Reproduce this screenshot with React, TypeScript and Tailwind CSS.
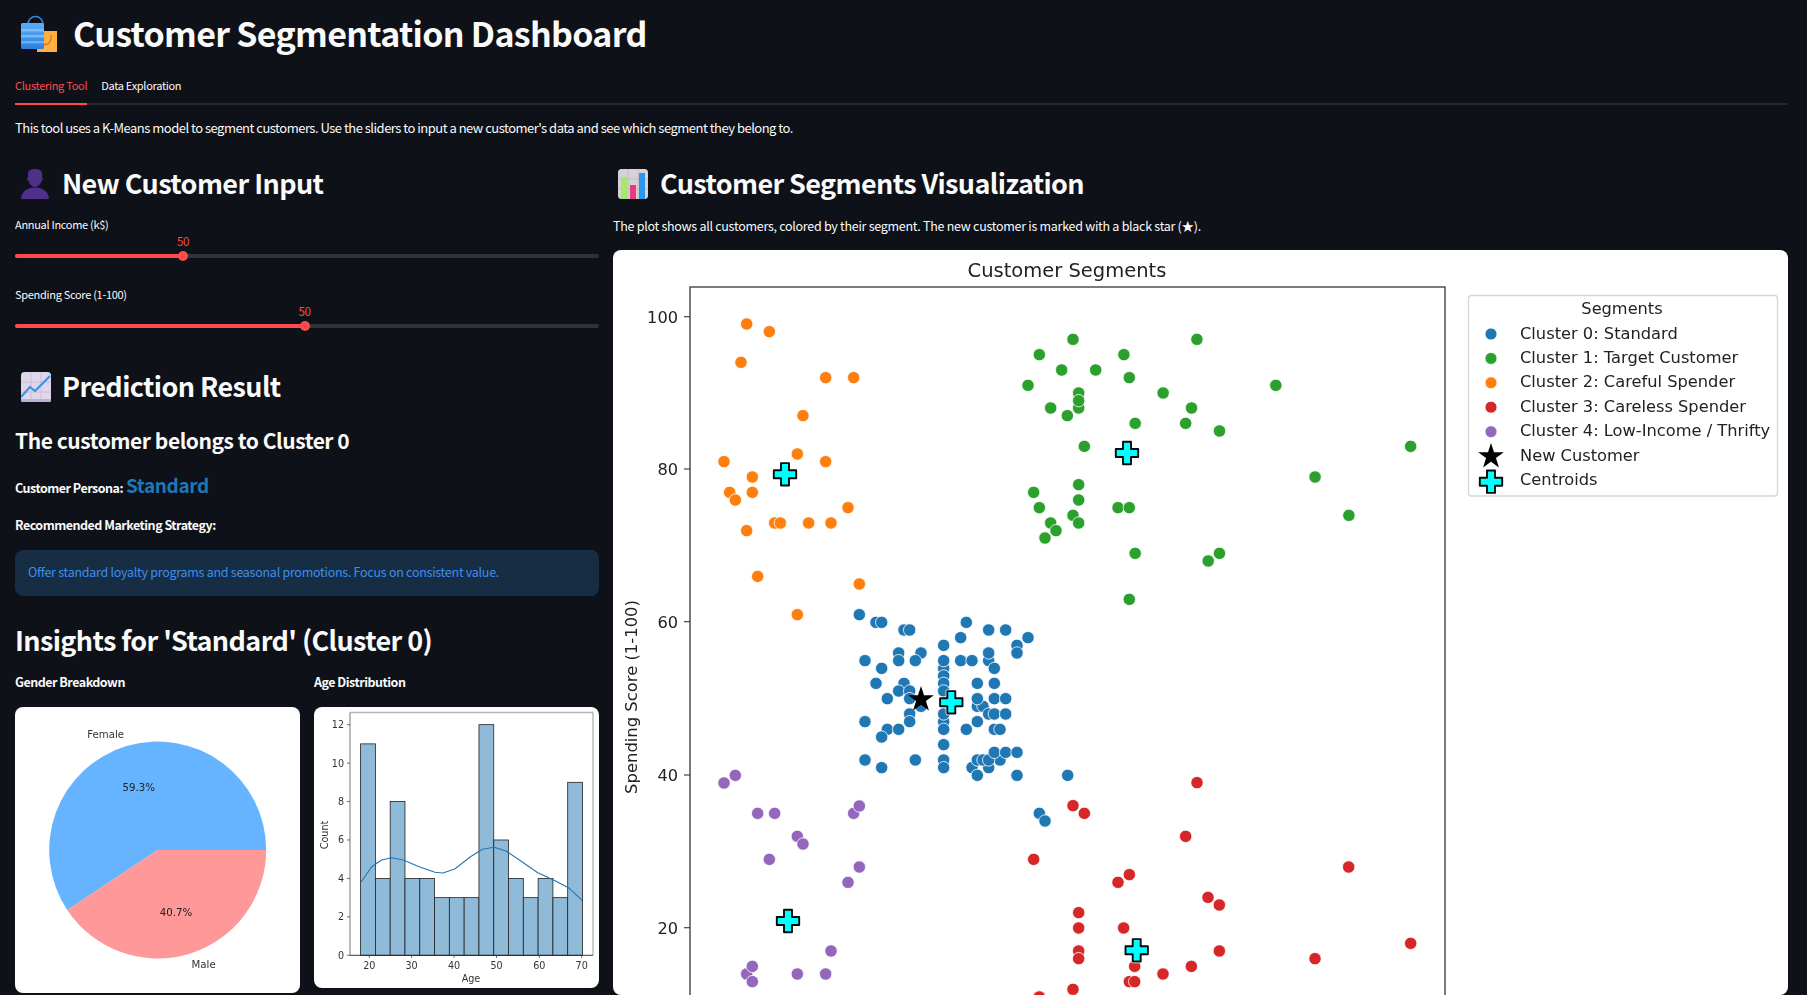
import React from "react";

type P = [number, number];
const z4 = (a: number[][]): P[] => a.map(([x, y]) => [610 + x / 3, 240 + y / 3]);
const z6 = (a: number[][]): P[] => a.map(([x, y]) => [610 + x / 3, 610 + y / 3]);
const z7 = (a: number[][]): P[] => a.map(([x, y]) => [1000 + x / 3, 610 + y / 3]);
const z5 = (a: number[][]): P[] => a.map(([x, y]) => [1100 + x / 2.218, 240 + y / 3]);

const blue = z6([[748,14],[798,37],[815,37],[1069,37],[882,60],[899,60],[1136,60],[1187,60],[1052,83],[1254,83],[1001,106],[1221,106],[866,129],[933,129],[1136,129],[1221,129],[765,152],[866,152],[916,152],[1136,152],[1136,129],[1001,175],[1001,198],[1001,220],[1001,243],[1001,152],[1052,152],[1086,152],[815,175],[1153,175],[798,220],[882,220],[1102,220],[1153,220],[866,243],[899,243],[832,266],[899,266],[933,289],[1102,289],[1119,289],[1102,266],[1153,266],[1187,266],[1001,335],[1001,312],[899,312],[1136,312],[1153,312],[1187,312],[765,335],[899,335],[1102,335],[832,358],[866,358],[1001,358],[1069,358],[1153,358],[1170,358],[815,381],[1001,404],[1086,473],[1136,473],[765,450],[916,450],[1001,450],[1102,450],[1119,450],[1170,450],[1136,450],[1153,427],[1187,427],[1221,427],[815,473],[1001,473],[1102,496],[1221,496],[1373,496],[1288,610],[1305,633]]);
const green = [...z4([[1389,298],[1288,344],[1355,390],[1457,390],[1254,436],[1406,459],[1406,504],[1406,482],[1322,504],[1372,527],[1423,619],[1406,734],[1271,757],[1406,780],[1288,803],[1389,826],[1322,849],[1406,849],[1338,872],[1305,894]]), ...z5([[215,298],[53,344],[65,413],[140,459],[203,504],[78,550],[190,550],[265,573],[390,436],[689,619],[477,711],[40,803],[65,803],[552,826],[78,940],[240,963],[265,940],[65,1078]])];
const orange = z4([[410,252],[478,275],[393,367],[647,413],[731,413],[579,527],[562,642],[647,665],[342,665],[427,711],[359,757],[376,780],[427,757],[714,803],[494,849],[511,849],[596,849],[663,849],[410,872],[443,1009],[748,1032],[562,1124]]);
const purple = z6([[376,496],[342,519],[731,610],[748,588],[443,610],[494,610],[562,679],[579,702],[478,748],[748,771],[714,817],[663,1023],[410,1092],[427,1069],[562,1092],[647,1092],[427,1115]]);
const red = [...z6([[1389,587],[1423,610],[1271,748],[1406,908],[1406,954],[1406,1023],[1406,1046],[1389,1138],[1288,1160]]), ...z7([[591,518],[557,679],[1046,771],[388,794],[354,817],[624,862],[658,885],[371,954],[658,1023],[1232,1000],[945,1046],[404,1069],[574,1069],[489,1092],[388,1115],[404,1115],[118,1161]])];

const centroids: P[] = [[785, 474.3], [951.3, 702.3], [788, 921], [1136.7, 950.3], [1127, 453]];

const starPts = (cx: number, cy: number, r: number) =>
  Array.from({ length: 10 }, (_, i) => {
    const rad = i % 2 === 0 ? r : r * 0.382;
    const a = -Math.PI / 2 + (i * Math.PI) / 5;
    return `${cx + rad * Math.cos(a)},${cy + rad * Math.sin(a)}`;
  }).join(" ");

const plusPts = (cx: number, cy: number) => {
  const o = 11.2, i = 4;
  return [[-i,-o],[i,-o],[i,-i],[o,-i],[o,i],[i,i],[i,o],[-i,o],[-i,i],[-o,i],[-o,-i],[-i,-i]]
    .map(([x, y]) => `${cx + x},${cy + y}`).join(" ");
};

function Plus({ x, y }: { x: number; y: number }) {
  return (
    <g>
      <polygon points={plusPts(x, y)} fill="none" stroke="#ffffff" strokeWidth={3.4} strokeLinejoin="round" />
      <polygon points={plusPts(x, y)} fill="#00ffff" stroke="#0a0a0a" strokeWidth={1.9} strokeLinejoin="round" />
    </g>
  );
}

function Dots({ pts, color }: { pts: P[]; color: string }) {
  return (
    <>
      {pts.map(([x, y], i) => (
        <circle key={i} cx={x} cy={y} r={6.2} fill={color} stroke="#ffffff" strokeWidth={0.8} />
      ))}
    </>
  );
}

const legendRows: [string, string][] = [
  ["Cluster 0: Standard", "#1f77b4"],
  ["Cluster 1: Target Customer", "#2ca02c"],
  ["Cluster 2: Careful Spender", "#ff7f0e"],
  ["Cluster 3: Careless Spender", "#d62728"],
  ["Cluster 4: Low-Income / Thrifty", "#9467bd"],
];

function ScatterChart() {
  const rowY = [333, 357.4, 381.8, 406.2, 430.7];
  return (
    <svg viewBox="613 250 1175 745" className="block w-[1175px] h-[745px] blur-[0.25px] font-['DejaVu_Sans',sans-serif]">
      <text x={1067} y={276.5} textAnchor="middle" fontSize={19.5} fill="#222">Customer Segments</text>
      <rect x={690} y={287} width={755} height={760} fill="none" stroke="#444" strokeWidth={1.4} />
      {[[100, 316.7], [80, 469], [60, 621.7], [40, 775], [20, 927.7]].map(([v, y]) => (
        <g key={v}>
          <line x1={684} x2={690} y1={y} y2={y} stroke="#333" strokeWidth={1.1} />
          <text x={678} y={y + 5.8} textAnchor="end" fontSize={16.2} fill="#222">{v}</text>
        </g>
      ))}
      <text transform="translate(637 697) rotate(-90)" textAnchor="middle" fontSize={16.4} fill="#222">Spending Score (1-100)</text>
      <Dots pts={orange} color="#ff7f0e" />
      <Dots pts={green} color="#2ca02c" />
      <Dots pts={red} color="#d62728" />
      <Dots pts={purple} color="#9467bd" />
      <Dots pts={blue} color="#1f77b4" />
      <polygon points={starPts(921, 699.5, 13.5)} fill="#000" />
      {centroids.map(([x, y], i) => <Plus key={i} x={x} y={y} />)}

      <rect x={1468.5} y={295.5} width={309} height={200.5} rx={3} fill="#fff" stroke="#d6d6d6" strokeWidth={1.3} />
      <text x={1622} y={314} textAnchor="middle" fontSize={16.2} fill="#222">Segments</text>
      {legendRows.map(([t, c], i) => (
        <g key={t}>
          <circle cx={1491} cy={rowY[i] + 1} r={6} fill={c} stroke="#fff" strokeWidth={0.8} />
          <text x={1520} y={rowY[i] + 5.6} fontSize={16.25} fill="#222">{t}</text>
        </g>
      ))}
      <polygon points={starPts(1491, 456.5, 13.5)} fill="#000" />
      <text x={1520} y={460.9} fontSize={16.25} fill="#222">New Customer</text>
      <polygon points={plusPts(1491, 481.7)} fill="#00ffff" stroke="#0a0a0a" strokeWidth={1.9} strokeLinejoin="round" />
      <text x={1520} y={485.3} fontSize={16.25} fill="#222">Centroids</text>
    </svg>
  );
}

function PieChart() {
  const cx = 157.7, cy = 850, r = 108.5;
  const a = (213.5 * Math.PI) / 180;
  const ex = cx + r * Math.cos(a), ey = cy - r * Math.sin(a);
  return (
    <svg viewBox="15 707 285 286" className="block w-[285px] h-[286px] blur-[0.35px] font-['DejaVu_Sans',sans-serif]">
      <path d={`M${cx} ${cy} L${cx + r} ${cy} A${r} ${r} 0 1 0 ${ex} ${ey} Z`} fill="#66b3ff" />
      <path d={`M${cx} ${cy} L${ex} ${ey} A${r} ${r} 0 0 0 ${cx + r} ${cy} Z`} fill="#ff9999" />
      <text x={105.6} y={738} textAnchor="middle" fontSize={10.2} fill="#333">Female</text>
      <text x={138.8} y={790.5} textAnchor="middle" fontSize={10.2} fill="#222">59.3%</text>
      <text x={176} y={915.5} textAnchor="middle" fontSize={10.2} fill="#222">40.7%</text>
      <text x={203.6} y={967.7} textAnchor="middle" fontSize={10.2} fill="#333">Male</text>
    </svg>
  );
}

function HistChart() {
  const counts = [11, 4, 8, 4, 4, 3, 3, 3, 12, 6, 4, 3, 4, 3, 9];
  const x0 = 360.6, bw = (582.5 - 360.6) / 15, y0 = 955.3, u = 19.22;
  const kde = [[912,578],[940,530],[965,510],[990,503],[1020,510],[1060,530],[1100,547],[1120,549],[1150,537],[1190,500],[1220,478],[1250,472],[1280,483],[1320,515],[1360,548],[1400,570],[1440,595],[1473,632]]
    .map(([x, y]) => `${(x / 2.529).toFixed(1)},${(690 + y / 3).toFixed(1)}`).join(" ");
  return (
    <svg viewBox="314 707 285 281" className="block w-[285px] h-[281px] blur-[0.35px] font-['DejaVu_Sans',sans-serif]">
      <line x1={350} x2={593} y1={712.5} y2={712.5} stroke="#b5b5b5" strokeWidth={1.4} />
      <line x1={593} x2={593} y1={712.5} y2={955.3} stroke="#b5b5b5" strokeWidth={1.4} />
      <line x1={350} x2={350} y1={712.5} y2={955.3} stroke="#666" strokeWidth={0.9} />
      {counts.map((c, i) => (
        <rect key={i} x={x0 + i * bw} y={y0 - c * u} width={bw} height={c * u} fill="#8fbbd9" stroke="#222" strokeWidth={0.8} />
      ))}
      <line x1={350} x2={593} y1={955.3} y2={955.3} stroke="#222" strokeWidth={0.9} />
      <polyline points={kde} fill="none" stroke="#1f77b4" strokeWidth={1.1} strokeLinejoin="round" />
      {[0, 2, 4, 6, 8, 10, 12].map((v) => (
        <g key={v}>
          <line x1={347} x2={350} y1={y0 - v * u} y2={y0 - v * u} stroke="#333" strokeWidth={0.7} />
          <text x={344} y={y0 - v * u + 3.4} textAnchor="end" fontSize={9.6} fill="#333">{v}</text>
        </g>
      ))}
      {[[20, 369.3], [30, 411.6], [40, 454], [50, 496.5], [60, 539.3], [70, 581.7]].map(([v, x]) => (
        <g key={v}>
          <line x1={x} x2={x} y1={955.3} y2={958} stroke="#333" strokeWidth={0.7} />
          <text x={x} y={968.5} textAnchor="middle" fontSize={9.6} fill="#333">{v}</text>
        </g>
      ))}
      <text x={471} y={981.5} textAnchor="middle" fontSize={9.6} fill="#333">Age</text>
      <text transform="translate(327.5 835) rotate(-90)" textAnchor="middle" fontSize={9.6} fill="#333">Count</text>
    </svg>
  );
}

function BagIcon() {
  return (
    <svg viewBox="0 0 44 40" className="w-[44px] h-[40px] shrink-0">
      <defs>
        <linearGradient id="bagB" x1="0" y1="0" x2="0" y2="1">
          <stop offset="0" stopColor="#5aaef5" />
          <stop offset="1" stopColor="#2f7fe0" />
        </linearGradient>
      </defs>
      <rect x="22" y="16" width="20" height="21" fill="#fbb040" />
      <path d="M36 20 v3 a6.5 6.5 0 0 1 -8 6.5" fill="none" stroke="#e8603a" strokeWidth="1.2" />
      <path d="M13 13 v-4 a7.5 7.5 0 0 1 15 0 v4" fill="none" stroke="#2f86d8" strokeWidth="1.6" />
      <rect x="6" y="8" width="23" height="26" rx="1.5" fill="url(#bagB)" />
      <rect x="6" y="14" width="23" height="2.4" fill="#8cc8f8" opacity="0.75" />
      <rect x="6" y="20" width="23" height="2.4" fill="#8cc8f8" opacity="0.75" />
      <rect x="6" y="26" width="23" height="2.4" fill="#8cc8f8" opacity="0.6" />
    </svg>
  );
}

function PersonIcon() {
  return (
    <svg viewBox="0 0 28 30" className="w-[28px] h-[30px] shrink-0">
      <path d="M0 30 C0.5 22.5 6 18.5 14 18.5 C22 18.5 27.5 22.5 28 30 Z" fill="#4e2f8a" />
      <path d="M7 5 C7 1.5 9.5 0 14 0 C18.5 0 21 1.5 21 5 L21 8.5 C22.3 9 22 12 20.4 12 C19.5 15.5 17 18 14 18 C11 18 8.5 15.5 7.6 12 C6 12 5.7 9 7 8.5 Z" fill="#4f3088" />
    </svg>
  );
}

function BarsIcon() {
  return (
    <svg viewBox="0 0 30 30" className="w-[30px] h-[30px] shrink-0">
      <rect width="30" height="30" rx="3.5" fill="#d6d3d8" />
      <path d="M10 0 V30 M20 0 V30 M0 10 H30 M0 20 H30" stroke="#bdb9c2" strokeWidth="0.9" />
      <rect x="3" y="8" width="6" height="22" fill="#a6e86a" />
      <rect x="12" y="16" width="6" height="14" fill="#e83a7c" />
      <rect x="21" y="4" width="6" height="26" fill="#2f96ee" />
    </svg>
  );
}

function TrendIcon() {
  return (
    <svg viewBox="0 0 30 30" className="w-[30px] h-[30px] shrink-0">
      <rect width="30" height="30" rx="3.5" fill="#e0d6ea" />
      <path d="M10 0 V30 M20 0 V30 M0 10 H30 M0 20 H30" stroke="#c9bdd6" strokeWidth="0.9" />
      <rect y="27" width="30" height="3" rx="1.5" fill="#bfb0d2" />
      <polyline points="0,25 9,15 14,19 29,4" fill="none" stroke="#3d93e4" strokeWidth="2.2" />
    </svg>
  );
}

function Slider({ label, pct }: { label: string; pct: number }) {
  return (
    <div>
      <div className="h-[20px] text-[11px] tracking-[-0.3px] leading-[18px] text-[#fafafa]">{label}</div>
      <div className="relative h-[40px]">
        <div className="absolute top-[19px] left-0 right-0 h-[4px] rounded-full bg-[#31333b]" />
        <div className="absolute top-[19px] left-0 h-[4px] rounded-full bg-[#ff4b4b]" style={{ width: pct }} />
        <div className="absolute top-[16px] w-[10px] h-[10px] rounded-full bg-[#ff4b4b]" style={{ left: pct - 5 }} />
        <div className="absolute -top-[1.5px] w-[30px] text-center text-[11.5px] tracking-[-0.3px] leading-[14px] text-[#ff4b4b]" style={{ left: pct - 15 }}>50</div>
      </div>
    </div>
  );
}

export default function App() {
  return (
    <div className="h-[995px] overflow-hidden bg-[#0e1117] px-[15px] text-[#fafafa] font-['Noto_Sans_CJK_SC','Noto_Sans',sans-serif]">
      <div className="flex items-center h-[70px] gap-[14px]">
        <BagIcon />
        <h1 className="pb-[4px] text-[34px] tracking-[-0.7px] font-bold leading-[44px]">Customer Segmentation Dashboard</h1>
      </div>

      <div className="flex h-[35px] w-[1773px] border-b-2 border-[#26282e] gap-[14px]">
        <div className="h-[35px] border-b-2 border-[#ff4b4b] text-[11px] tracking-[-0.3px] leading-[30px] text-[#ff4b4b]">Clustering Tool</div>
        <div className="text-[11px] tracking-[-0.3px] leading-[30px] text-[#fafafa]">Data Exploration</div>
      </div>

      <p className="mt-[11px] h-[24px] text-[13px] tracking-[-0.51px] leading-[24px]">This tool uses a K-Means model to segment customers. Use the sliders to input a new customer's data and see which segment they belong to.</p>

      <div className="mt-[24px] flex gap-[14px] items-start">
        <div className="w-[584px] shrink-0">
          <div className="flex items-center h-[40px] gap-[13px] pl-[6px]">
            <PersonIcon />
            <h2 className="pb-[2px] text-[27px] tracking-[-0.6px] font-semibold leading-[40px]">New Customer Input</h2>
          </div>
          <div className="mt-[11px]">
            <Slider label="Annual Income (k$)" pct={168} />
          </div>
          <div className="mt-[10px]">
            <Slider label="Spending Score (1-100)" pct={289.5} />
          </div>
          <div className="mt-[22px] flex items-center h-[40px] gap-[11px] pl-[6px]">
            <TrendIcon />
            <h2 className="pb-[2px] text-[27px] tracking-[-0.6px] font-semibold leading-[40px]">Prediction Result</h2>
          </div>
          <h3 className="mt-[16px] h-[34px] text-[21px] tracking-[-0.46px] font-semibold leading-[34px]">The customer belongs to Cluster 0</h3>
          <div className="mt-[16px] flex items-baseline gap-[3px] h-[24px] text-[12.5px] tracking-[-0.5px] font-bold leading-[24px]">
            <span>Customer Persona:</span>
            <span className="text-[19px] tracking-[-0.4px] text-[#1f77b4]">Standard</span>
          </div>
          <div className="mt-[17px] h-[24px] text-[12.5px] tracking-[-0.5px] font-bold leading-[22px]">Recommended Marketing Strategy:</div>
          <div className="mt-[12px] h-[46px] rounded-lg bg-[#172d43] px-[13px] text-[12.5px] tracking-[-0.27px] leading-[44px] text-[#3d8ef0]">Offer standard loyalty programs and seasonal promotions. Focus on consistent value.</div>
          <h2 className="mt-[23px] h-[42px] text-[27px] tracking-[-0.62px] font-semibold leading-[42px]">Insights for 'Standard' (Cluster 0)</h2>
          <div className="mt-[11px] grid grid-cols-2 gap-x-[14px] items-start">
            <div className="h-[22px] text-[12.5px] tracking-[-0.5px] font-bold leading-[20px]">Gender Breakdown</div>
            <div className="h-[22px] text-[12.5px] tracking-[-0.5px] font-bold leading-[20px]">Age Distribution</div>
            <div className="mt-[13px] rounded-lg bg-white overflow-hidden"><PieChart /></div>
            <div className="mt-[13px] rounded-lg bg-white overflow-hidden"><HistChart /></div>
          </div>
        </div>

        <div className="w-[1175px] shrink-0">
          <div className="flex items-center h-[40px] gap-[12px] pl-[5px]">
            <BarsIcon />
            <h2 className="pb-[2px] text-[27px] tracking-[-0.62px] font-semibold leading-[40px]">Customer Segments Visualization</h2>
          </div>
          <p className="mt-[10px] h-[24px] text-[12.5px] tracking-[-0.28px] leading-[24px]">The plot shows all customers, colored by their segment. The new customer is marked with a black star (★).</p>
          <div className="mt-[12px] rounded-lg bg-white overflow-hidden">
            <ScatterChart />
          </div>
        </div>
      </div>
    </div>
  );
}
